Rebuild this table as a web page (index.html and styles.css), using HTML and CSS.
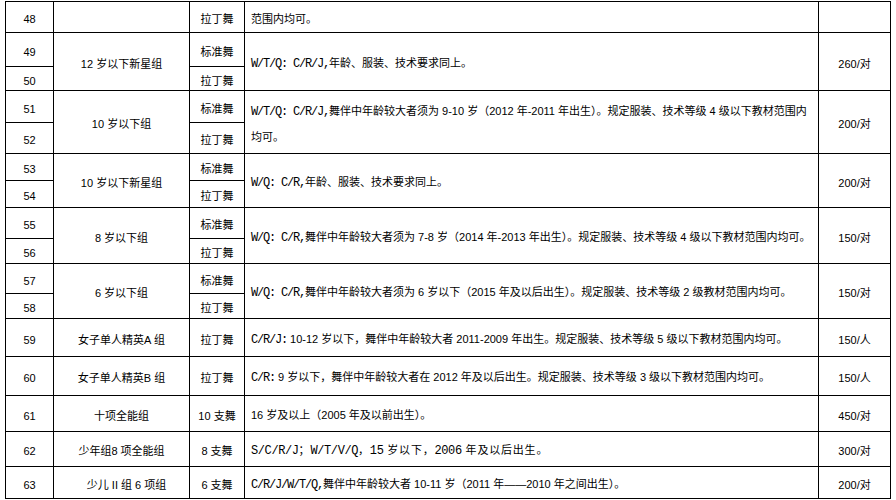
FILE: index.html
```html
<!DOCTYPE html>
<html lang="zh-CN">
<head>
<meta charset="utf-8">
<title>比赛组别</title>
<link rel="stylesheet" href="styles.css">
</head>
<body>
<table class="grid">
  <colgroup>
    <col class="c-no">
    <col class="c-group">
    <col class="c-dance">
    <col class="c-desc">
    <col class="c-fee">
  </colgroup>
  <tbody>
    <tr class="h31"><td>48</td><td></td><td>拉丁舞</td><td class="d">范围内均可。</td><td></td></tr>

    <tr class="h34"><td>49</td><td rowspan="2">12 岁以下新星组</td><td>标准舞</td><td rowspan="2" class="d"><span class="m">W/T/Q: C/R/J,</span>年龄、服装、技术要求同上。</td><td rowspan="2">260/对</td></tr>
    <tr class="h24"><td>50</td><td>拉丁舞</td></tr>

    <tr class="h32"><td>51</td><td rowspan="2">10 岁以下组</td><td>标准舞</td><td rowspan="2" class="d"><span class="m">W/T/Q: C/R/J,</span>舞伴中年龄较大者须为 9-10 岁（2012 年-2011 年出生）。规定服装、技术等级 4 级以下教材范围内<br>均可。</td><td rowspan="2">200/对</td></tr>
    <tr class="h31"><td>52</td><td>拉丁舞</td></tr>

    <tr class="h27"><td>53</td><td rowspan="2">10 岁以下新星组</td><td>标准舞</td><td rowspan="2" class="d"><span class="m">W/Q: C/R,</span>年龄、服装、技术要求同上。</td><td rowspan="2">200/对</td></tr>
    <tr class="h27"><td>54</td><td>拉丁舞</td></tr>

    <tr class="h31"><td>55</td><td rowspan="2">8 岁以下组</td><td>标准舞</td><td rowspan="2" class="d"><span class="m">W/Q: C/R,</span>舞伴中年龄较大者须为 7-8 岁（2014 年-2013 年出生）。规定服装、技术等级 4 级以下教材范围内均可。</td><td rowspan="2">150/对</td></tr>
    <tr class="h25"><td>56</td><td>拉丁舞</td></tr>

    <tr class="h30"><td>57</td><td rowspan="2">6 岁以下组</td><td>标准舞</td><td rowspan="2" class="d"><span class="m">W/Q: C/R,</span>舞伴中年龄较大者须为 6 岁以下（2015 年及以后出生）。规定服装、技术等级 2 级教材范围内均可。</td><td rowspan="2">150/对</td></tr>
    <tr class="h25"><td>58</td><td>拉丁舞</td></tr>

    <tr class="h38"><td>59</td><td>女子单人精英A 组</td><td>拉丁舞</td><td class="d"><span class="m">C/R/J:</span> 10-12 岁以下，舞伴中年龄较大者 2011-2009 年出生。规定服装、技术等级 5 级以下教材范围内均可。</td><td>150/人</td></tr>
    <tr class="h39"><td>60</td><td>女子单人精英B 组</td><td>拉丁舞</td><td class="d"><span class="m">C/R:</span> 9 岁以下，舞伴中年龄较大者在 2012 年及以后出生。规定服装、技术等级 3 级以下教材范围内均可。</td><td>150/人</td></tr>
    <tr class="h36"><td>61</td><td>十项全能组</td><td>10 支舞</td><td class="d">16 岁及以上（2005 年及以前出生）。</td><td>450/对</td></tr>
    <tr class="h35"><td>62</td><td>少年组8 项全能组</td><td>8 支舞</td><td class="d wide"><span class="m">S/C/R/J</span>；<span class="m">W/T/V/Q</span>，<span class="m">15</span> 岁以下，<span class="m">2006</span> 年及以后出生。</td><td>300/对</td></tr>
    <tr class="h32"><td>63</td><td class="shift">少儿 II 组 6 项组</td><td>6 支舞</td><td class="d"><span class="m">C/R/J/W/T/Q,</span>舞伴中年龄较大者 10-11 岁（2011 年——2010 年之间出生）。</td><td>200/对</td></tr>
  </tbody>
</table>
</body>
</html>
```
FILE: styles.css
```css
html, body {
  margin: 0;
  padding: 0;
  background: #ffffff;
}

body {
  font-family: "Liberation Sans", "Noto Sans CJK SC", sans-serif;
  font-size: 11px;
  color: #000;
}

.grid {
  border-collapse: collapse;
  table-layout: fixed;
  width: 886px;
  margin: 1px 0 0 5px;
}

.c-no { width: 48px; }
.c-group { width: 136px; }
.c-dance { width: 55px; }
.c-desc { width: 574px; }
.c-fee { width: 72px; }

.grid td {
  border: 1px solid #000;
  padding: 4px 0 0 0;
  text-align: center;
  vertical-align: middle;
  line-height: 16px;
  white-space: nowrap;
  overflow: hidden;
}

.grid td.d {
  text-align: left;
  padding-left: 6px;
  line-height: 25px;
}

.grid td.wide {
  letter-spacing: 0.8px;
}

.grid td.shift {
  padding-left: 10px;
}

.m {
  font-family: "Liberation Mono", "Noto Sans CJK SC", monospace;
  font-size: 12px;
  letter-spacing: -1.2px;
}

.grid td.wide .m {
  letter-spacing: -0.4px;
}

.h24 { height: 24px; }
.h25 { height: 25px; }
.h27 { height: 27px; }
.h30 { height: 30px; }
.h31 { height: 31px; }
.h32 { height: 32px; }
.h34 { height: 34px; }
.h35 { height: 35px; }
.h36 { height: 36px; }
.h38 { height: 38px; }
.h39 { height: 39px; }
```
